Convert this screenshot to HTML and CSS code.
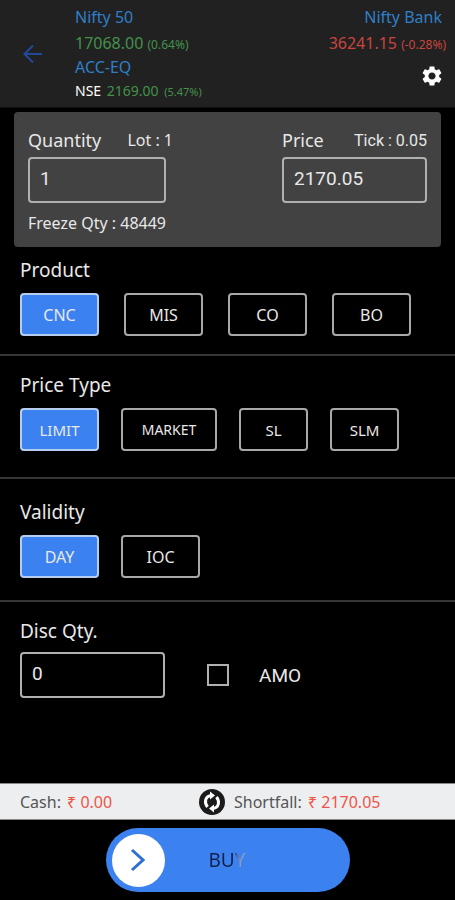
FILE: index.html
```html
<!DOCTYPE html>
<html lang="en">
<head>
    <meta charset="UTF-8">
    <meta name="viewport" content="width=device-width, initial-scale=1.0">
    <title>Buy ACC-EQ</title>
    <link rel="stylesheet" href="styles.css">
</head>
<body>
    <header class="top-bar">
        <button type="button" class="icon-btn back-btn" aria-label="Back">
            <svg width="20" height="20" viewBox="0 0 20 20" fill="none" stroke="#24489c" stroke-width="2">
                <path d="M19 10H2M10 1.500L1.500 10L10 18.500"/>
            </svg>
        </button>
        <div class="quotes">
            <div class="name">Nifty 50</div>
            <div class="value up">17068.00 <small>(0.64%)</small></div>
            <div class="name stock-name">ACC-EQ</div>
            <div class="value stock up"><span class="exchange">NSE</span> 2169.00 <small>(5.47%)</small></div>
        </div>
        <div class="quotes right">
            <div class="name">Nifty Bank</div>
            <div class="value down">36241.15 <small>(-0.28%)</small></div>
            <button type="button" class="icon-btn settings-btn" aria-label="Settings">
                <svg width="24" height="24" viewBox="0 0 24 24" fill="#fff">
                    <path d="M19.140 12.940c.040-.300.060-.610.060-.940 0-.320-.020-.640-.070-.940l2.030-1.580c.180-.140.230-.410.120-.610l-1.920-3.320c-.120-.220-.370-.290-.590-.220l-2.390.960c-.500-.380-1.030-.700-1.620-.940l-.360-2.540c-.040-.240-.240-.410-.480-.410h-3.840c-.240 0-.430.170-.470.410l-.360 2.540c-.590.240-1.130.570-1.620.940l-2.390-.960c-.220-.080-.470 0-.590.220L2.740 8.870c-.120.210-.080.470.120.610l2.030 1.580c-.050.300-.090.630-.090.940s.020.640.070.940l-2.030 1.580c-.180.140-.230.410-.120.610l1.920 3.320c.120.220.370.290.590.220l2.390-.960c.500.380 1.030.700 1.620.940l.360 2.540c.050.240.240.410.480.410h3.840c.240 0 .440-.170.470-.410l.360-2.540c.590-.240 1.130-.560 1.620-.940l2.390.960c.220.080.470 0 .590-.220l1.920-3.320c.120-.220.070-.470-.120-.610l-2.010-1.580zM12 15.600c-1.980 0-3.600-1.620-3.600-3.600s1.620-3.600 3.600-3.600 3.600 1.620 3.600 3.600-1.620 3.600-3.600 3.600z"/>
                </svg>
            </button>
        </div>
    </header>

    <main>
        <div class="order-card">
            <div class="field qty">
                <div class="field-head">
                    <label for="quantity">Quantity</label>
                    <span>Lot : 1</span>
                </div>
                <input type="text" id="quantity" value="1">
                <div class="freeze">Freeze Qty : 48449</div>
            </div>
            <div class="field price">
                <div class="field-head">
                    <label for="price">Price</label>
                    <span class="tick">Tick : 0.05</span>
                </div>
                <input type="text" id="price" value="2170.05">
            </div>
        </div>

        <section class="product">
            <h2>Product</h2>
            <div class="options">
                <button type="button" class="active">CNC</button>
                <button type="button">MIS</button>
                <button type="button">CO</button>
                <button type="button">BO</button>
            </div>
        </section>

        <section class="price-type">
            <h2>Price Type</h2>
            <div class="options">
                <button type="button" class="active">LIMIT</button>
                <button type="button" class="wide">MARKET</button>
                <button type="button" class="narrow">SL</button>
                <button type="button" class="narrow">SLM</button>
            </div>
        </section>

        <section class="validity">
            <h2>Validity</h2>
            <div class="options">
                <button type="button" class="active">DAY</button>
                <button type="button">IOC</button>
            </div>
        </section>

        <section class="disclosed">
            <label class="title" for="discQty">Disc Qty.</label>
            <div class="disc-row">
                <input type="text" id="discQty" value="0">
                <input type="checkbox" id="amo">
                <label class="amo" for="amo">AMO</label>
            </div>
        </section>
    </main>

    <footer>
        <div class="funds">
            <div class="cash">Cash: <span>₹ 0.00</span></div>
            <button type="button" class="icon-btn refresh-btn" aria-label="Refresh funds">
                <svg width="26" height="26" viewBox="0 0 26 26">
                    <circle cx="13" cy="13" r="13" fill="#1b1b1b"/>
                    <g fill="none" stroke="#fff" stroke-width="3">
                        <path d="M12 6.500C6 7.500 5 13.500 8.500 18"/>
                        <path d="M14 19.500C20 18.500 21 12.500 17.500 8"/>
                    </g>
                    <path d="M11 2.500L16 6.500L11 10.500ZM15 15.500L10 19.500L15 23.500Z" fill="#fff"/>
                </svg>
            </button>
            <div class="shortfall">Shortfall: <span>₹ 2170.05</span></div>
        </div>
        <button type="button" class="buy-btn">
            <span class="knob">
                <svg width="16" height="24" viewBox="0 0 16 24" fill="none" stroke="#2f6fd0" stroke-width="3">
                    <path d="M2 2L13 12L2 22"/>
                </svg>
            </span>
            <span class="buy-text">BUY</span>
        </button>
    </footer>
</body>
</html>
```

FILE: styles.css
```css
* {
    box-sizing: border-box;
}

body {
    margin: 0;
    min-height: 100vh;
    display: flex;
    flex-direction: column;
    background-color: #000;
    color: #e8e8e8;
    font-family: "Noto Sans", sans-serif;
}

button,
input {
    font-family: inherit;
    color: inherit;
    margin: 0;
}

button {
    cursor: pointer;
}

.icon-btn {
    display: flex;
    padding: 0;
    border: none;
    background: none;
}

/* header */
.top-bar {
    display: flex;
    align-items: flex-start;
    padding: 4px 9px 4px 23px;
    border-bottom: 1px solid #111;
    background-color: #212121;
}

.back-btn {
    align-self: center;
    width: 52px;
}

.quotes {
    flex: 1;
    white-space: nowrap;
}

.quotes .name {
    font-size: 16px;
    line-height: 26px;
    color: #2f7fc8;
}

.quotes .value {
    font-size: 16px;
    line-height: 26px;
}

.quotes .stock-name {
    line-height: 22px;
}

.quotes .stock {
    font-size: 14px;
    line-height: 25px;
}

.quotes small {
    font-size: 12px;
    line-height: 1;
}

.quotes .stock small {
    margin-left: 2px;
    font-size: 11px;
}

.exchange {
    margin-right: 2px;
    color: #fff;
}

.up {
    color: #43924a;
}

.down {
    color: #c9453f;
}

.right {
    display: flex;
    flex-direction: column;
    align-items: flex-end;
}

.right .name {
    margin-right: 4px;
}

.settings-btn {
    margin-top: 8px;
    margin-right: 2px;
}

/* quantity and price */
.order-card {
    display: flex;
    justify-content: space-between;
    margin: 4px 14px 0;
    padding: 16px 14px 12px;
    border-radius: 4px;
    background-color: #424242;
}

.field {
    width: 145px;
}

.field-head {
    display: flex;
    justify-content: space-between;
    align-items: center;
    height: 24px;
    margin-bottom: 5px;
    font-size: 16px;
    white-space: nowrap;
}

.field-head label {
    font-size: 18px;
}

.tick {
    font-family: Roboto, sans-serif;
}

input[type="text"] {
    display: block;
    width: 100%;
    height: 46px;
    padding: 0 10px 4px;
    border: 2px solid #b0b0b0;
    border-radius: 4px;
    background: transparent;
    font-family: Roboto, sans-serif;
    font-size: 19px;
}

.qty input[type="text"] {
    width: 138px;
}

.freeze {
    margin-top: 8px;
    font-size: 16px;
    line-height: 24px;
}

/* option groups */
section {
    padding: 0 20px;
}

h2,
.title {
    display: block;
    margin: 0;
    font-size: 19px;
    font-weight: normal;
    line-height: 24px;
}

.product {
    padding-top: 11px;
    padding-bottom: 18px;
    border-bottom: 2px solid #363636;
}

.price-type {
    padding-top: 17px;
    padding-bottom: 26px;
    border-bottom: 2px solid #363636;
}

.validity {
    padding-top: 21px;
    padding-bottom: 22px;
    border-bottom: 2px solid #363636;
}

.disclosed {
    padding-top: 17px;
}

.options {
    display: flex;
    gap: 22px;
    margin-top: 11px;
}

.product .options {
    gap: 25px;
}

.options button {
    width: 79px;
    height: 43px;
    padding: 0;
    border: 2px solid #a8a8a8;
    border-radius: 4px;
    background-color: #000;
    font-size: 16px;
}

.price-type button {
    font-size: 15px;
}

.options .active {
    background-color: #3b82f0;
    border-color: #b5cdf0;
}

.options .wide {
    width: 96px;
    font-size: 14px;
}

.options .narrow {
    width: 69px;
}

.disc-row {
    display: flex;
    align-items: center;
    margin-top: 9px;
}

.disc-row input[type="text"] {
    width: 145px;
}

input[type="checkbox"] {
    appearance: none;
    width: 22px;
    height: 22px;
    margin: 0 30px 0 42px;
    border: 2px solid #b0b0b0;
}

input[type="checkbox"]:checked {
    background-color: #3b82f0;
}

.amo {
    font-family: Roboto, sans-serif;
    font-size: 19px;
}

/* funds and buy */
footer {
    margin-top: auto;
    padding-bottom: 8px;
}

.funds {
    display: flex;
    align-items: center;
    height: 37px;
    padding: 0 20px;
    border-top: 1px solid #888;
    border-bottom: 1px solid #888;
    background-color: #edeef0;
    color: #555;
    font-size: 16px;
    white-space: nowrap;
}

.funds span {
    margin-left: 2px;
    color: #ee5548;
}

.cash {
    width: 179px;
}

.refresh-btn {
    margin-right: 9px;
}

.buy-btn {
    display: flex;
    align-items: center;
    width: 244px;
    height: 64px;
    margin: 8px auto 0;
    padding: 0 6px;
    border: none;
    border-radius: 32px;
    background-color: #3b82f0;
}

.knob {
    display: flex;
    align-items: center;
    justify-content: center;
    width: 53px;
    height: 53px;
    border-radius: 50%;
    background-color: #fff;
}

.buy-text {
    margin-left: 44px;
    font-size: 19px;
    background: linear-gradient(90deg, #10204a 65%, #8a9cc0 85%);
    background-clip: text;
    -webkit-background-clip: text;
    color: transparent;
}
```
